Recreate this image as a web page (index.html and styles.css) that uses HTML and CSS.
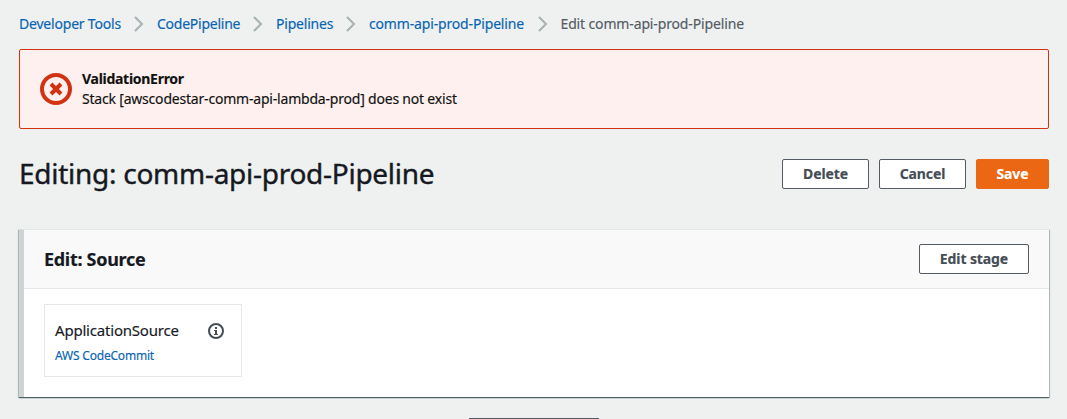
FILE: index.html
```html
<!DOCTYPE html>
<html lang="en">
<head>
<meta charset="utf-8">
<title>Edit comm-api-prod-Pipeline</title>
<link rel="stylesheet" href="styles.css">
</head>
<body>
<nav class="crumbs">
  <a class="crumb-tools">Developer Tools</a>
  <svg class="chevron" viewBox="0 0 10 16"><path d="M1 1l7 7-7 7"/></svg>
  <a class="crumb-service">CodePipeline</a>
  <svg class="chevron" viewBox="0 0 10 16"><path d="M1 1l7 7-7 7"/></svg>
  <a class="crumb-list">Pipelines</a>
  <svg class="chevron" viewBox="0 0 10 16"><path d="M1 1l7 7-7 7"/></svg>
  <a class="crumb-pipeline">comm-api-prod-Pipeline</a>
  <svg class="chevron" viewBox="0 0 10 16"><path d="M1 1l7 7-7 7"/></svg>
  <span class="crumb-current">Edit comm-api-prod-Pipeline</span>
</nav>
<section class="alert">
  <svg class="alert-icon" viewBox="0 0 32 32"><circle cx="16" cy="16" r="14"/><path d="M11 11l10 10M21 11L11 21"/></svg>
  <div class="alert-text">
    <strong>ValidationError</strong>
    <p>Stack [awscodestar-comm-api-lambda-prod] does not exist</p>
  </div>
</section>
<header class="page-header">
  <h1>Editing: comm-api-prod-Pipeline</h1>
  <div class="actions">
    <button class="btn btn-normal">Delete</button>
    <button class="btn btn-normal">Cancel</button>
    <button class="btn btn-primary">Save</button>
  </div>
</header>
<section class="stage">
  <header class="stage-header">
    <h2>Edit: Source</h2>
    <button class="btn btn-stage">Edit stage</button>
  </header>
  <div class="stage-body">
    <article class="action-card">
      <div class="action-title">
        <span>ApplicationSource</span>
        <svg class="info" viewBox="0 0 16 16"><circle cx="8" cy="8" r="7"/><path d="M7 4h2v2H7zM6 7h3v4h1v1H6v-1h1V8H6z"/></svg>
      </div>
      <a class="provider">AWS CodeCommit</a>
    </article>
  </div>
</section>
<div class="add-row"><div class="add-edge"></div></div>
</body>
</html>
```
FILE: styles.css
```css
* { box-sizing: border-box; }
html { overflow: hidden; }
body {
  margin: 0;
  height: 419px;
  overflow: hidden;
  padding: 14px 18px 0 19px;
  background: #eff1f1;
  color: #16191f;
  font: 14px/20px "Noto Sans", "Open Sans", sans-serif;
  letter-spacing: -0.2px;
  -webkit-text-stroke: 0.15px;
  white-space: nowrap;
}
h1, h2, p { margin: 0; }
a { color: #0764b0; }
.crumbs { display: flex; align-items: center; height: 20px; color: #545b64; }
.crumb-tools { width: 102px; }
.crumb-service { width: 83px; letter-spacing: -0.25px; }
.crumb-list { width: 57px; }
.crumb-pipeline { width: 155.5px; letter-spacing: -0.16px; }
.crumb-current { letter-spacing: -0.14px; }
.chevron { width: 10px; height: 16px; margin: 0 13px; fill: none; stroke: #a5b1b2; stroke-width: 2; }
.alert {
  display: flex;
  align-items: center;
  height: 80px;
  margin-top: 15px;
  padding-left: 20px;
  border: 1px solid #d13212;
  border-radius: 2px;
  background: #fdf0ee;
  color: #111;
}
.alert-icon { width: 32px; height: 32px; margin-right: 10px; fill: none; stroke: #d13212; stroke-width: 4; }
.alert-text strong { display: block; letter-spacing: -0.28px; }
.page-header { display: flex; justify-content: space-between; margin-top: 30px; height: 70px; }
h1 { font-size: 28px; font-weight: 400; line-height: 28px; letter-spacing: -0.27px; -webkit-text-stroke: 0.4px; }
.actions { display: flex; gap: 10px; }
.btn {
  height: 30px;
  padding: 0;
  border: 1px solid #545b64;
  border-radius: 2px;
  background: #fff;
  color: #444c55;
  font: inherit;
  font-weight: 700;
  letter-spacing: -0.1px;
}
.btn-normal { width: 87px; }
.btn-primary { width: 73px; border-color: #ec6714; background: #ec6714; color: #fff; }
.stage {
  height: 168px;
  border-top: 1px solid #e5e8e8;
  border-left: 5px solid #ccd5d4;
  background: #fff;
  box-shadow: 0 1px 1px rgba(0, 28, 36, .5), 1px 1px 1px rgba(0, 28, 36, .2), -1px 1px 1px rgba(0, 28, 36, .2);
}
.stage-header {
  display: flex;
  justify-content: space-between;
  align-items: center;
  height: 59px;
  padding: 0 20px;
  border-bottom: 1px solid #e5e8e8;
  background: #f9f9f9;
}
h2 { font-size: 18px; line-height: 22px; letter-spacing: -0.3px; }
.btn-stage { width: 110px; }
.stage-body { padding: 15px 20px; }
.action-card { width: 198px; height: 73px; padding: 16px 17px 0 10px; border: 1px solid #e5e8e8; }
.action-title { display: flex; justify-content: space-between; align-items: center; height: 20px; font-size: 15px; line-height: 18px; }
.action-title span { padding-bottom: 2px; }
.info { width: 16px; height: 16px; fill: #444c55; }
.info circle { fill: none; stroke: #444c55; stroke-width: 2; }
.provider { display: block; margin-top: 5px; font-size: 12px; }
.add-row { display: flex; justify-content: center; margin-top: 21px; }
.add-edge { width: 130px; height: 1px; background: #545b64; }
```
